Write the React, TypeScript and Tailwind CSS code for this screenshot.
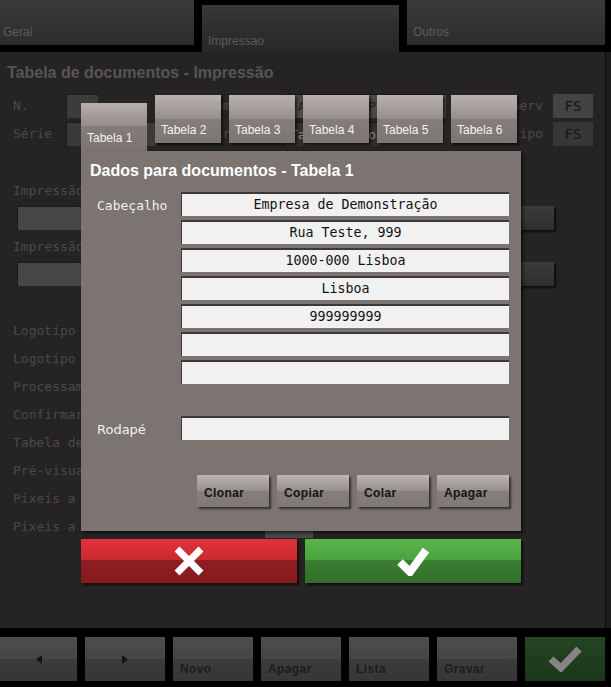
import React from 'react';

const sans = "font-['Liberation_Sans',Arial,sans-serif]";
const mono = "font-['DejaVu_Sans_Mono',monospace]";

const cabecalho = ['Empresa de Demonstração', 'Rua Teste, 999', '1000-000 Lisboa', 'Lisboa', '999999999', '', ''];
const opcoes = [
  'Logotipo na impressão',
  'Logotipo no ecrã',
  'Processamento',
  'Confirmar impressão',
  'Tabela de impressão',
  'Pré-visualização',
  'Pixeis a avançar',
];

function TopTab({ label, active, className }: { label: string; active?: boolean; className: string }) {
  return (
    <div
      className={
        active
          ? `${className} mt-[5px] h-[47px] bg-[linear-gradient(to_bottom,#393737_0%,#302e2e_45%,#282626_100%)] pl-[6px] pt-[29px] text-[12px] leading-[14px] text-[#5d5b5b]`
          : `${className} h-[45px] bg-[linear-gradient(to_bottom,#3c3a3a_0%,#353333_45%,#2e2c2c_100%)] pt-[25px] text-[12px] leading-[14px] text-[#5d5b5b]`
      }
    >
      {label}
    </div>
  );
}

function DarkField({ className, children }: { className: string; children?: React.ReactNode }) {
  return <div className={`${className} h-[24px] border-t border-l border-[#1b1a1a]`}>{children}</div>;
}

function DlgTab({ label, active }: { label: string; active?: boolean }) {
  return (
    <div
      className={
        active
          ? 'mt-[8px] flex h-[48px] w-[66px] items-end bg-[linear-gradient(to_bottom,#b6afac_0%,#938c89_48%,#837c79_48%,#7b7471_100%)] pb-[6px] pl-[6px]'
          : 'flex h-[48px] w-[66px] items-end bg-[linear-gradient(to_bottom,#b8b1ae_0%,#958e8b_50%,#847d7a_50%,#7c7572_100%)] pb-[6px] pl-[6px] shadow-[2px_2px_2px_rgba(0,0,0,0.55)]'
      }
    >
      <span className="text-[12px] leading-[14px] text-[#f4f2f2]">{label}</span>
    </div>
  );
}

function LightField({ value }: { value: string }) {
  return (
    <div className={`${mono} flex h-[24px] items-center justify-center border-t-2 border-l border-[#3a3838] bg-[#f1f1f1] text-[13.3px] text-[#111]`}>
      {value}
    </div>
  );
}

function GreyButton({ label }: { label: string }) {
  return (
    <div className="flex h-[32px] w-[72px] items-center bg-[linear-gradient(to_bottom,#bbb4b1_0%,#978f8c_50%,#867f7c_50%,#7e7774_100%)] pl-[7px] pt-[4px] shadow-[2px_2px_2px_rgba(0,0,0,0.6)]">
      <span className="text-[12px] font-bold tracking-[0.4px] text-[#141414]">{label}</span>
    </div>
  );
}

function BarButton({ label, children, first }: { label?: string; children?: React.ReactNode; first?: boolean }) {
  return (
    <div
      className={`${first ? 'w-[77px]' : 'w-[80px]'} flex h-[44px] bg-[linear-gradient(to_bottom,#4e4e50_0%,#454547_50%,#3c3c3e_50%,#363638_100%)] ${
        label ? 'items-end pb-[5px] pl-[7px]' : 'items-center justify-center'
      }`}
    >
      {label ? <span className="text-[12px] font-bold leading-[14px] tracking-[0.4px] text-[#1c1c1c]">{label}</span> : children}
    </div>
  );
}

export default function App() {
  return (
    <div className={`${sans} relative h-[687px] w-[611px] overflow-hidden bg-black`}>
      {/* separadores de topo */}
      <div className="flex h-[52px] items-start gap-[8px]">
        <TopTab label="Geral" className="w-[194px] pl-[3px]" />
        <TopTab label="Impressao" active className="w-[197px]" />
        <TopTab label="Outros" className="w-[198px] pl-[6px]" />
      </div>

      <div className="flex">
        <main className={`${mono} h-[576px] w-[605px] bg-[#252323] pt-[11px] pl-[7px] pr-[12px] text-[13px] text-[#4b4949]`}>
          <h1 className={`${sans} text-[16px] font-bold leading-[20px] text-[#575555]`}>Tabela de documentos - Impressão</h1>

          <div className="mt-[11px] flex flex-col gap-[4px] pl-[6px]">
            <div className="flex h-[24px] items-center">
              <span className="w-[53px]">N.</span>
              <DarkField className="w-[32px] bg-[#3d3c3c]" />
              <span className="ml-[109px] w-[77px]">Nome</span>
              <DarkField className="flex w-[162px] items-center bg-[#4a4848] pl-[5px] text-[#1e1e1e]">FATURA SIMPLES</DarkField>
              <span className="flex-1 pr-[10px] text-right">Serv</span>
              <div className="flex h-[24px] w-[40px] items-center justify-center bg-[#444343] text-[14px] text-[#151515]">FS</div>
            </div>
            <div className="flex h-[24px] items-center">
              <span className="w-[53px]">Série</span>
              <DarkField className="w-[90px] bg-[#3b3a3a]" />
              <span className="ml-[51px] w-[77px]">Marca</span>
              <DarkField className="flex w-[162px] items-center bg-[#302e2e] pl-[5px] text-[#8a8888]">Talão de controlo</DarkField>
              <span className="flex-1 pr-[10px] text-right">Tipo</span>
              <div className="flex h-[24px] w-[40px] items-center justify-center bg-[#383737] text-[14px] text-[#151515]">FS</div>
            </div>
          </div>

          <div className="mt-[37px] pl-[6px] leading-[16px]">Impressão de documentos</div>
          <div className="mt-[7px] flex items-center">
            <DarkField className="ml-[10px] h-[22px] w-[480px] bg-[#474646]" />
            <div className="ml-[18px] h-[24px] w-[39px] bg-[linear-gradient(to_bottom,#3c3a3a,#2f2d2d)] shadow-[2px_2px_2px_rgba(0,0,0,0.6)]" />
          </div>

          <div className="mt-[9px] pl-[6px] leading-[16px]">Impressão de talões</div>
          <div className="mt-[7px] flex items-center">
            <DarkField className="ml-[10px] h-[22px] w-[480px] bg-[#474646]" />
            <div className="ml-[18px] h-[24px] w-[39px] bg-[linear-gradient(to_bottom,#3c3a3a,#2f2d2d)] shadow-[2px_2px_2px_rgba(0,0,0,0.6)]" />
          </div>

          <div className="mt-[31px] flex flex-col pl-[6px]">
            {opcoes.map((o) => (
              <div key={o} className="flex h-[28px] items-center">
                {o}
              </div>
            ))}
            <div className="flex h-[28px] items-center">
              <span className="w-[252px]">Pixeis a cortar</span>
              <div className="mt-[10px] h-[12px] w-[48px] bg-[#4a4949]" />
            </div>
          </div>
        </main>
        <div className="h-[576px] w-[6px] border-l border-[#0a0a0a] bg-[#1c1c1c]" />
      </div>

      {/* barra inferior */}
      <div className="mt-[9px] flex gap-[8px]">
        <BarButton first>
          <svg width="6" height="9" viewBox="0 0 6 9">
            <polygon points="6,0 6,9 0,4.5" fill="#141414" />
          </svg>
        </BarButton>
        <BarButton>
          <svg width="6" height="9" viewBox="0 0 6 9">
            <polygon points="0,0 0,9 6,4.5" fill="#141414" />
          </svg>
        </BarButton>
        <BarButton label="Novo" />
        <BarButton label="Apagar" />
        <BarButton label="Lista" />
        <BarButton label="Gravar" />
        <div className="flex h-[44px] w-[80px] items-center justify-center bg-[linear-gradient(to_bottom,#244523,#1b361a)]">
          <svg width="34" height="26" viewBox="0 0 34 26">
            <polyline points="3,13 13,22 31,3" fill="none" stroke="#858585" strokeWidth="7" />
          </svg>
        </div>
      </div>

      {/* janela de dados */}
      <div className="absolute left-[81px] top-[95px] flex w-[440px] flex-col">
        <div className="flex h-[56px] items-start gap-[8px]">
          <DlgTab label="Tabela 1" active />
          <DlgTab label="Tabela 2" />
          <DlgTab label="Tabela 3" />
          <DlgTab label="Tabela 4" />
          <DlgTab label="Tabela 5" />
          <DlgTab label="Tabela 6" />
        </div>

        <div className="h-[380px] bg-[#7b7471] pt-[10px] shadow-[2px_2px_3px_rgba(0,0,0,0.6)]">
          <h2 className="pl-[9px] text-[16px] font-bold leading-[20px] text-white">Dados para documentos - Tabela 1</h2>

          <div className="mt-[11px] flex">
            <div className={`${mono} w-[100px] pl-[16px] text-[13px] leading-[27px] text-[#f0f0f0]`}>Cabeçalho</div>
            <div className="flex w-[328px] flex-col gap-[4px]">
              {cabecalho.map((c, i) => (
                <LightField key={i} value={c} />
              ))}
            </div>
          </div>

          <div className="mt-[32px] flex">
            <div className="w-[100px] pl-[16px] font-['DejaVu_Sans',sans-serif] text-[13px] leading-[27px] text-[#f0f0f0]">Rodapé</div>
            <div className="w-[328px]">
              <LightField value="" />
            </div>
          </div>

          <div className="mt-[32px] flex justify-end gap-[8px] pr-[12px]">
            <GreyButton label="Clonar" />
            <GreyButton label="Copiar" />
            <GreyButton label="Colar" />
            <GreyButton label="Apagar" />
          </div>
        </div>

        <div className="mt-[8px] flex gap-[8px]">
          <div className="flex h-[44px] w-[216px] items-center justify-center bg-[linear-gradient(to_bottom,#e2333b_0%,#c8292f_48%,#901d22_48%,#861a1f_100%)] shadow-[2px_2px_2px_rgba(0,0,0,0.6)]">
            <svg width="30" height="30" viewBox="0 0 30 30">
              <path d="M3 3 L27 27 M27 3 L3 27" stroke="#fff" strokeWidth="7" />
            </svg>
          </div>
          <div className="flex h-[44px] w-[216px] items-center justify-center bg-[linear-gradient(to_bottom,#58b64a_0%,#4aa23f_48%,#3a8031_48%,#326e2a_100%)] shadow-[2px_2px_2px_rgba(0,0,0,0.6)]">
            <svg width="32" height="30" viewBox="0 0 32 30">
              <polyline points="3,16 13,26 29,4" fill="none" stroke="#fff" strokeWidth="8" />
            </svg>
          </div>
        </div>
      </div>
    </div>
  );
}
